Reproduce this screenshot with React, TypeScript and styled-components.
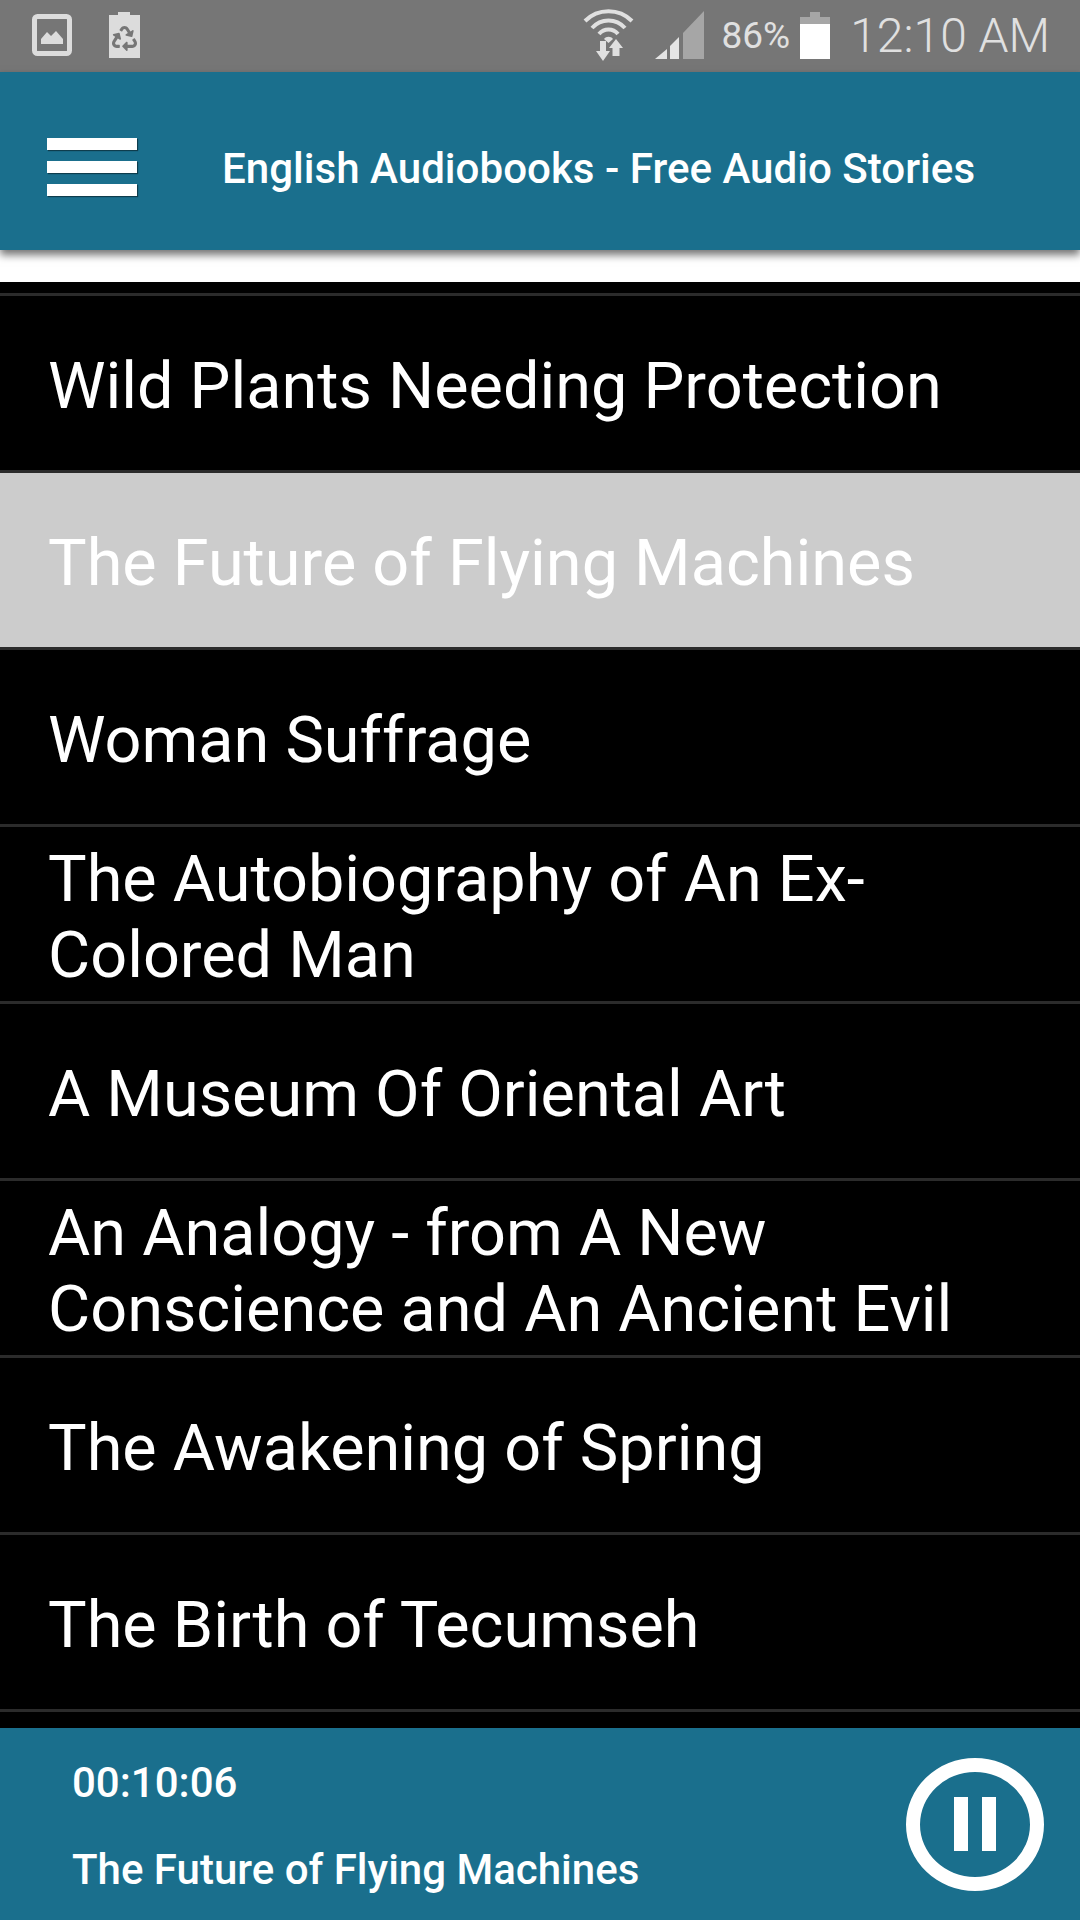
import React from "react";
import styled, { createGlobalStyle } from "styled-components";
import { FaRecycle } from "react-icons/fa";

const GlobalStyle = createGlobalStyle`
  html, body {
    margin: 0;
    padding: 0;
    background: #000;
    font-family: Roboto, "Noto Sans", sans-serif;
  }
  * {
    box-sizing: border-box;
  }
`;

const Screen = styled.div`
  width: 1080px;
  height: 1920px;
  display: flex;
  flex-direction: column;
  overflow: hidden;
  background: #fff;
`;

const StatusBar = styled.div`
  height: 72px;
  flex: none;
  display: flex;
  align-items: center;
  background: #767676;
  color: #e0e0e0;
  padding: 0 30px 2px 32px;
`;

const StatusLeft = styled.div`
  display: flex;
  align-items: center;
  gap: 37px;
  flex: 1;
`;

const StatusRight = styled.div`
  display: flex;
  align-items: center;
`;

const IconSlot = styled.span<{ $gap: number }>`
  display: flex;
  margin-right: ${(p) => p.$gap}px;
`;

const RecycleSlot = styled.span`
  position: relative;
  display: flex;
`;

const RecycleMark = styled.span`
  position: absolute;
  left: 3px;
  top: 14px;
  display: flex;
  color: #767676;
`;

const BatteryPercent = styled.span`
  font-size: 37px;
  line-height: 44px;
  margin: 2px 10px 0 0;
`;

const Clock = styled.span`
  font-size: 48px;
  line-height: 56px;
  font-weight: 300;
  margin: 2px 0 0 20px;
`;

const AppBar = styled.header`
  height: 178px;
  flex: none;
  display: flex;
  align-items: center;
  padding: 13px 0 0 47px;
  background: #1a6f8d;
  box-shadow: 0 5px 8px rgba(0, 0, 0, 0.55);
  position: relative;
  z-index: 1;
`;

const Burger = styled.div`
  width: 90px;
  display: flex;
  flex-direction: column;
  gap: 11px;
  margin: -2px 86px 0 0;
`;

const BurgerBar = styled.span`
  height: 12px;
  background: #fff;
  box-shadow: 1px 1px 1px rgba(0, 0, 0, 0.45);
`;

const AppTitle = styled.h1`
  margin: 2px 0 0 -1px;
  font-size: 42.1px;
  font-weight: 500;
  color: #fff;
`;

const Gap = styled.div`
  height: 32px;
  flex: none;
  background: #fff;
`;

const List = styled.ul`
  flex: 1;
  min-height: 0;
  margin: 0;
  padding: 11px 0 0;
  list-style: none;
  overflow: hidden;
  background: #000;
`;

const Row = styled.li<{ $active?: boolean }>`
  height: 177px;
  display: flex;
  align-items: center;
  padding: 5px 48px 0;
  border-top: 3px solid #2b2b2b;
  background: ${(p) => (p.$active ? "#cccccc" : "#000")};
  background-clip: padding-box;
  font-size: 64.8px;
  line-height: 76px;
  color: #fff;
  white-space: pre-line;

  &:last-child {
    height: 180px;
    border-bottom: 3px solid #2b2b2b;
  }
`;

const Player = styled.footer`
  height: 192px;
  flex: none;
  display: flex;
  align-items: center;
  justify-content: space-between;
  padding: 0 36px 0 72px;
  background: #1a6f8d;
  color: #fff;
`;

const TrackInfo = styled.div`
  display: flex;
  flex-direction: column;
  gap: 39px;
  padding-top: 4px;
  font-size: 42px;
  font-weight: 500;
  line-height: 48px;
`;

const PauseButton = styled.div`
  width: 138px;
  height: 133px;
  border: 14px solid #fff;
  border-radius: 50%;
  display: flex;
  align-items: center;
  justify-content: center;
  gap: 14px;
`;

const PauseBar = styled.span`
  width: 14px;
  height: 54px;
  background: #fff;
`;

const titles = [
  "Wild Plants Needing Protection",
  "The Future of Flying Machines",
  "Woman Suffrage",
  "The Autobiography of An Ex-\nColored Man",
  "A Museum Of Oriental Art",
  "An Analogy - from A New\nConscience and An Ancient Evil",
  "The Awakening of Spring",
  "The Birth of Tecumseh",
];

const PictureIcon = () => (
  <svg width="40" height="42" viewBox="0 0 40 42">
    <rect x="2.5" y="2.5" width="35" height="37" rx="3" fill="none" stroke="#dcdcdc" strokeWidth="5" />
    <path d="M9 30 V25 L15 18 L19 22 L24 17 L31 25 V30 Z" fill="#dcdcdc" />
  </svg>
);

const RecycleIcon = () => (
  <RecycleSlot>
    <svg width="31" height="46" viewBox="0 0 31 46">
      <path d="M9 0 H21 V3 H31 V46 H0 V3 H9 Z" fill="#dcdcdc" />
    </svg>
    <RecycleMark>
      <FaRecycle size={25} />
    </RecycleMark>
  </RecycleSlot>
);

const WifiIcon = () => (
  <svg width="51" height="54" viewBox="0 0 51 54">
    <path d="M2 13 C15 0 36 0 49 13" fill="none" stroke="#e0e0e0" strokeWidth="4" />
    <path d="M9 20 C18 10 33 10 42 20" fill="none" stroke="#e0e0e0" strokeWidth="4" />
    <path d="M16 26 C21 20 30 20 35 26" fill="none" stroke="#e0e0e0" strokeWidth="4" />
    <path d="M21 31 C23 28 28 28 30 31 L25.5 35 Z" fill="#e0e0e0" />
    <path d="M17 33 H23 V43 H27 L20 53 L13 43 H17 Z" fill="#e0e0e0" />
    <path d="M33 31 L40 40 H36.5 V48 H29.5 V40 H26 Z" fill="#e0e0e0" />
  </svg>
);

const SignalIcon = () => (
  <svg width="49" height="48" viewBox="0 0 49 48">
    <path d="M0 48 L12 38 V48 Z" fill="#e4e4e4" />
    <path d="M15 35 L24 26 V48 H15 Z" fill="#e4e4e4" />
    <path d="M28 22 L49 0 V48 H28 Z" fill="#a6a6a6" />
  </svg>
);

const BatteryIcon = () => (
  <svg width="30" height="47" viewBox="0 0 30 47">
    <path d="M10 0 H20 V5 H30 V12 H0 V5 H10 Z" fill="#a6a6a6" />
    <rect x="0" y="12" width="30" height="35" fill="#fff" />
  </svg>
);

const App: React.FC = () => {
  return (
    <Screen>
      <GlobalStyle />
      <StatusBar>
        <StatusLeft>
          <PictureIcon />
          <RecycleIcon />
        </StatusLeft>
        <StatusRight>
          <IconSlot $gap={21}>
            <WifiIcon />
          </IconSlot>
          <IconSlot $gap={17}>
            <SignalIcon />
          </IconSlot>
          <BatteryPercent>86%</BatteryPercent>
          <BatteryIcon />
          <Clock>12:10 AM</Clock>
        </StatusRight>
      </StatusBar>
      <AppBar>
        <Burger>
          <BurgerBar />
          <BurgerBar />
          <BurgerBar />
        </Burger>
        <AppTitle>English Audiobooks - Free Audio Stories</AppTitle>
      </AppBar>
      <Gap />
      <List>
        {titles.map((title, i) => (
          <Row key={title} $active={i === 1}>
            {title}
          </Row>
        ))}
      </List>
      <Player>
        <TrackInfo>
          <span>00:10:06</span>
          <span>The Future of Flying Machines</span>
        </TrackInfo>
        <PauseButton>
          <PauseBar />
          <PauseBar />
        </PauseButton>
      </Player>
    </Screen>
  );
};

export default App;
